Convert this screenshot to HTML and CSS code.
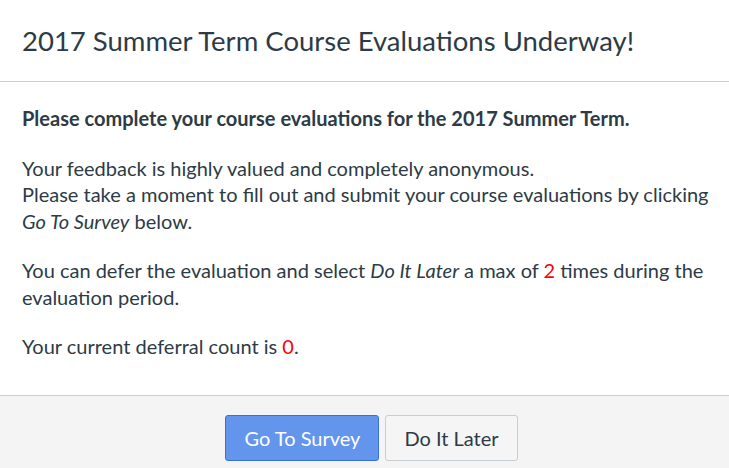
FILE: index.html
```html
<!DOCTYPE html>
<html>
	<head>
		<meta charset="UTF-8">
		<title>Course Evaluations</title>
		<link rel="stylesheet" href="styles.css">
	</head>
	<body>
		<div class="dialog">
			<div class="dialog-header">
				<h2>2017 Summer Term Course Evaluations Underway!</h2>
			</div>
			<div class="dialog-body">
				<p class="lead">Please complete your course evaluations for the 2017 Summer Term.</p>
				<p>Your feedback is highly valued and completely anonymous.<br>
				Please take a moment to fill out and submit your course evaluations by clicking <em>Go To Survey</em> below.</p>
				<p>You can defer the evaluation and select <em>Do It Later</em> a max of <span class="count">2</span> times during the evaluation period.</p>
				<p>Your current deferral count is <span class="count">0</span>.</p>
			</div>
			<div class="dialog-footer">
				<button class="btn btn-primary">Go To Survey</button>
				<button class="btn">Do It Later</button>
			</div>
		</div>
	</body>
</html>
```

FILE: styles.css
```css
html, body{
	margin: 0;
	padding: 0;
}
body{
	background: #fff;
	font-family: Lato, "Open Sans", sans-serif;
	color: #2d3b45;
}
.dialog-header{
	height: 81px;
	padding: 0 22px;
	display: flex;
	align-items: center;
	border-bottom: 1px solid #c7cdd1;
}
.dialog-header h2{
	margin: 0;
	font-size: 27.5px;
	font-weight: normal;
}
.dialog-body{
	padding: 23px 10px 35px 22px;
	font-size: 20px;
	line-height: 26.5px;
}
.dialog-body p{
	margin: 0 0 23px;
}
.dialog-body p:last-child{
	margin-bottom: 0;
}
.dialog-body .lead{
	font-weight: bold;
}
.count{
	color: #ff0000;
}
.dialog-footer{
	background: #f4f4f4;
	border-top: 1px solid #c7cdd1;
	padding: 19px 0 19px 14px;
	display: flex;
	justify-content: center;
	gap: 6px;
}
.btn{
	font-family: Lato, "Open Sans", sans-serif;
	font-size: 20px;
	height: 46px;
	padding: 0 18px;
	border: 1px solid #c7cdd1;
	border-radius: 3px;
	background: #f5f5f5;
	color: #2d3b45;
}
.btn-primary{
	background: #6495ed;
	border-color: #3a6fd8;
	color: #fff;
}
```
